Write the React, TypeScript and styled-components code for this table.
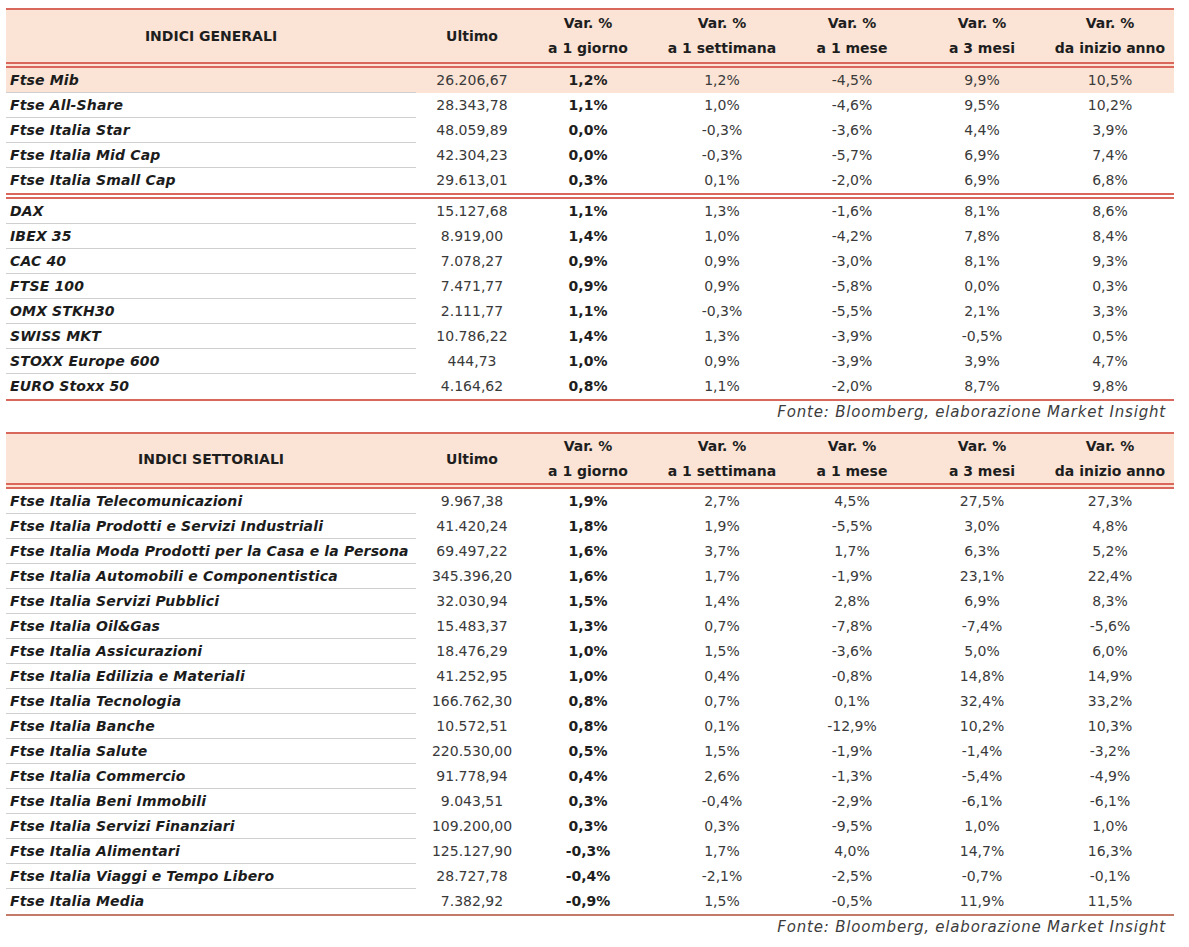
import React, { FC } from "react"
import styled, { createGlobalStyle } from "styled-components"

const RED = "#d9675b"
const PEACH = "#fbe4d6"

type Row = [string, string, string, string, string, string, string]

const generali: Row[][] = [
  [
    ["Ftse Mib", "26.206,67", "1,2%", "1,2%", "-4,5%", "9,9%", "10,5%"],
    ["Ftse All-Share", "28.343,78", "1,1%", "1,0%", "-4,6%", "9,5%", "10,2%"],
    ["Ftse Italia Star", "48.059,89", "0,0%", "-0,3%", "-3,6%", "4,4%", "3,9%"],
    ["Ftse Italia Mid Cap", "42.304,23", "0,0%", "-0,3%", "-5,7%", "6,9%", "7,4%"],
    ["Ftse Italia Small Cap", "29.613,01", "0,3%", "0,1%", "-2,0%", "6,9%", "6,8%"],
  ],
  [
    ["DAX", "15.127,68", "1,1%", "1,3%", "-1,6%", "8,1%", "8,6%"],
    ["IBEX 35", "8.919,00", "1,4%", "1,0%", "-4,2%", "7,8%", "8,4%"],
    ["CAC 40", "7.078,27", "0,9%", "0,9%", "-3,0%", "8,1%", "9,3%"],
    ["FTSE 100", "7.471,77", "0,9%", "0,9%", "-5,8%", "0,0%", "0,3%"],
    ["OMX STKH30", "2.111,77", "1,1%", "-0,3%", "-5,5%", "2,1%", "3,3%"],
    ["SWISS MKT", "10.786,22", "1,4%", "1,3%", "-3,9%", "-0,5%", "0,5%"],
    ["STOXX Europe 600", "444,73", "1,0%", "0,9%", "-3,9%", "3,9%", "4,7%"],
    ["EURO Stoxx 50", "4.164,62", "0,8%", "1,1%", "-2,0%", "8,7%", "9,8%"],
  ],
]

const settoriali: Row[][] = [
  [
    ["Ftse Italia Telecomunicazioni", "9.967,38", "1,9%", "2,7%", "4,5%", "27,5%", "27,3%"],
    ["Ftse Italia Prodotti e Servizi Industriali", "41.420,24", "1,8%", "1,9%", "-5,5%", "3,0%", "4,8%"],
    ["Ftse Italia Moda Prodotti per la Casa e la Persona", "69.497,22", "1,6%", "3,7%", "1,7%", "6,3%", "5,2%"],
    ["Ftse Italia Automobili e Componentistica", "345.396,20", "1,6%", "1,7%", "-1,9%", "23,1%", "22,4%"],
    ["Ftse Italia Servizi Pubblici", "32.030,94", "1,5%", "1,4%", "2,8%", "6,9%", "8,3%"],
    ["Ftse Italia Oil&Gas", "15.483,37", "1,3%", "0,7%", "-7,8%", "-7,4%", "-5,6%"],
    ["Ftse Italia Assicurazioni", "18.476,29", "1,0%", "1,5%", "-3,6%", "5,0%", "6,0%"],
    ["Ftse Italia Edilizia e Materiali", "41.252,95", "1,0%", "0,4%", "-0,8%", "14,8%", "14,9%"],
    ["Ftse Italia Tecnologia", "166.762,30", "0,8%", "0,7%", "0,1%", "32,4%", "33,2%"],
    ["Ftse Italia Banche", "10.572,51", "0,8%", "0,1%", "-12,9%", "10,2%", "10,3%"],
    ["Ftse Italia Salute", "220.530,00", "0,5%", "1,5%", "-1,9%", "-1,4%", "-3,2%"],
    ["Ftse Italia Commercio", "91.778,94", "0,4%", "2,6%", "-1,3%", "-5,4%", "-4,9%"],
    ["Ftse Italia Beni Immobili", "9.043,51", "0,3%", "-0,4%", "-2,9%", "-6,1%", "-6,1%"],
    ["Ftse Italia Servizi Finanziari", "109.200,00", "0,3%", "0,3%", "-9,5%", "1,0%", "1,0%"],
    ["Ftse Italia Alimentari", "125.127,90", "-0,3%", "1,7%", "4,0%", "14,7%", "16,3%"],
    ["Ftse Italia Viaggi e Tempo Libero", "28.727,78", "-0,4%", "-2,1%", "-2,5%", "-0,7%", "-0,1%"],
    ["Ftse Italia Media", "7.382,92", "-0,9%", "1,5%", "-0,5%", "11,9%", "11,5%"],
  ],
]

const GlobalStyle = createGlobalStyle`
  body {
    margin: 0;
    background: #fff;
    font-family: "DejaVu Sans", "Liberation Sans", sans-serif;
    color: #1c1c1c;
  }
`

const COLS = "410px 112px 120px 148px 112px 148px 118px"

const Page = styled.div`
  width: 1168px;
  padding: 8px 15px 0 6px;
`

const Block = styled.section`
  margin-bottom: 7px;
`

const Table = styled.div<{ $bottom: string }>`
  border-top: 2px solid ${RED};
  border-bottom: 2px solid ${p => p.$bottom};
`

const HeadRow = styled.div<{ $h: number }>`
  display: grid;
  grid-template-columns: ${COLS};
  height: ${p => p.$h}px;
  background: ${PEACH};
  border-bottom: 6px double ${RED};
  box-sizing: content-box;
`

const HeadCell = styled.div<{ $pr?: number }>`
  display: flex;
  flex-direction: column;
  align-items: center;
  justify-content: center;
  padding-right: ${p => p.$pr ?? 0}px;
  font-weight: bold;
  font-size: 14px;
  line-height: 25px;
  color: #1e1e1e;
  white-space: nowrap;
`

const Group = styled.div<{ $divider: boolean }>`
  border-bottom: ${p => (p.$divider ? `6px double ${RED}` : "none")};
`

const DataRow = styled.div<{ $highlight: boolean }>`
  display: grid;
  grid-template-columns: ${COLS};
  height: 25px;
  background: ${p => (p.$highlight ? PEACH : "transparent")};
`

const NameCell = styled.div<{ $line: boolean }>`
  padding-left: 4px;
  font-size: 14px;
  font-weight: bold;
  font-style: italic;
  letter-spacing: 0.15px;
  line-height: 24px;
  color: #1c1c1c;
  white-space: nowrap;
  border-bottom: 1px solid ${p => (p.$line ? "#cfcfcf" : "transparent")};
`

const ValueCell = styled.div<{ $bold?: boolean; $pr?: number }>`
  text-align: center;
  font-size: 14px;
  line-height: 25px;
  padding-right: ${p => p.$pr ?? 0}px;
  font-weight: ${p => (p.$bold ? "bold" : "normal")};
  color: ${p => (p.$bold ? "#1e1e1e" : "#3a3a3a")};
`

const Source = styled.div`
  text-align: right;
  padding: 1px 8px 0 0;
  height: 23px;
  font-size: 15px;
  font-style: italic;
  letter-spacing: 0.8px;
  line-height: 20px;
  color: #3c3c3c;
`

const headers: [string, string][] = [
  ["Var. %", "a 1 giorno"],
  ["Var. %", "a 1 settimana"],
  ["Var. %", "a 1 mese"],
  ["Var. %", "a 3 mesi"],
  ["Var. %", "da inizio anno"],
]

interface IndexTableProps {
  title: string
  groups: Row[][]
  headHeight: number
  bottom: string
  highlightFirst?: boolean
}

const IndexTable: FC<IndexTableProps> = ({ title, groups, headHeight, bottom, highlightFirst }) => {
  return (
    <Block>
      <Table $bottom={bottom}>
        <HeadRow $h={headHeight}>
          <HeadCell>{title}</HeadCell>
          <HeadCell>Ultimo</HeadCell>
          {headers.map(([a, b], i) => (
            <HeadCell key={b} $pr={i === 4 ? 10 : 0}>
              <span>{a}</span>
              <span>{b}</span>
            </HeadCell>
          ))}
        </HeadRow>
        {groups.map((rows, gi) => (
          <Group key={gi} $divider={gi < groups.length - 1}>
            {rows.map((r, ri) => (
              <DataRow key={r[0]} $highlight={!!highlightFirst && gi === 0 && ri === 0}>
                <NameCell $line={ri < rows.length - 1}>{r[0]}</NameCell>
                <ValueCell>{r[1]}</ValueCell>
                <ValueCell $bold>{r[2]}</ValueCell>
                <ValueCell>{r[3]}</ValueCell>
                <ValueCell>{r[4]}</ValueCell>
                <ValueCell>{r[5]}</ValueCell>
                <ValueCell $pr={10}>{r[6]}</ValueCell>
              </DataRow>
            ))}
          </Group>
        ))}
      </Table>
      <Source>Fonte: Bloomberg, elaborazione Market Insight</Source>
    </Block>
  )
}

const App: FC = () => {
  return (
    <Page>
      <GlobalStyle />
      <IndexTable title="INDICI GENERALI" groups={generali} headHeight={52} bottom={RED} highlightFirst />
      <IndexTable title="INDICI SETTORIALI" groups={settoriali} headHeight={49} bottom="#c47a68" />
    </Page>
  )
}

export default App
